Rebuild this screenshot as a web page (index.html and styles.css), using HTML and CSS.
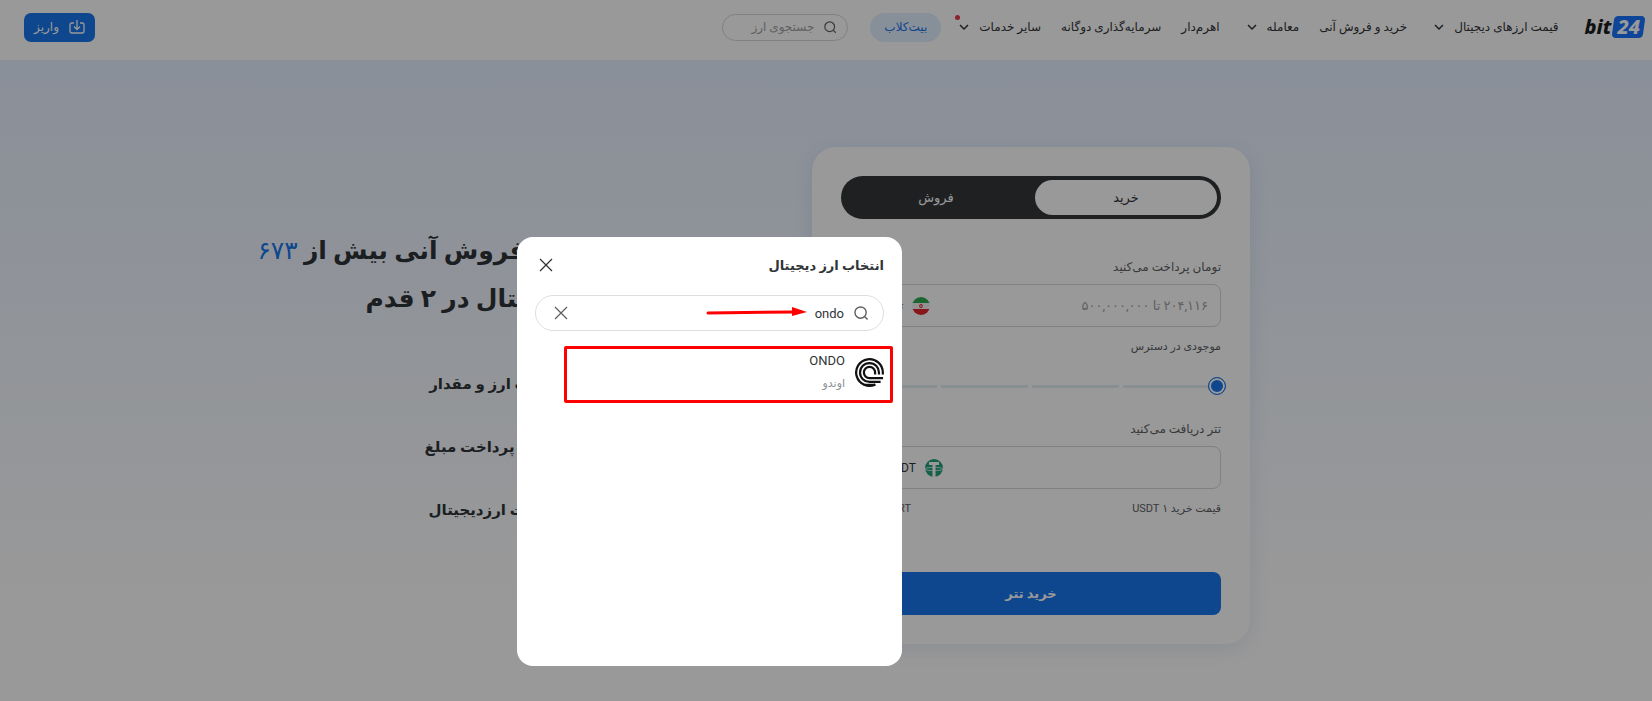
FILE: index.html
```html
<!DOCTYPE html>
<html lang="fa" dir="rtl">
<head>
  <meta charset="UTF-8" />
  <title>بیت۲۴ | خرید و فروش آنی</title>
  <meta name="viewport" content="width=device-width, initial-scale=1" />
  <link rel="stylesheet" href="styles.css">
</head>
<body>

  <header class="header">
    <a class="logo" href="#" dir="ltr"><span>bit</span><span class="logo-num">24</span></a>

    <nav class="nav">
      <a href="#" class="has-menu">قیمت ارزهای دیجیتال <svg class="chevron" viewBox="0 0 10 10"><path d="M1 3l4 4 4-4"/></svg></a>
      <a href="#">خرید و فروش آنی</a>
      <a href="#" class="has-menu">معامله <svg class="chevron" viewBox="0 0 10 10"><path d="M1 3l4 4 4-4"/></svg></a>
      <a href="#">اهرم‌دار</a>
      <a href="#">سرمایه‌گذاری دوگانه</a>
      <a href="#" class="has-dot">سایر خدمات <svg class="chevron" viewBox="0 0 10 10"><path d="M1 3l4 4 4-4"/></svg></a>
    </nav>

    <a class="club" href="#">بیت‌کلاب</a>

    <label class="top-search">
      <svg class="icon-search small" viewBox="0 0 16 16"><circle cx="7" cy="7" r="6"/><path d="M11.500 11.500l3 3"/></svg>
      <input type="text" placeholder="جستجوی ارز" aria-label="جستجوی ارز" />
    </label>

    <button class="deposit" type="button">
      <svg viewBox="0 0 16 16"><path d="M5 4H3a2 2 0 0 0-2 2v6a2 2 0 0 0 2 2h10a2 2 0 0 0 2-2V6a2 2 0 0 0-2-2h-2M8 1v9M5 7.500l3 3 3-3"/></svg>
      واریز
    </button>
  </header>

  <main class="hero">
    <form class="trade-card">
      <div class="tabs">
        <button type="button" class="tab active">خرید</button>
        <button type="button" class="tab">فروش</button>
      </div>

      <label class="field-label" for="pay">تومان پرداخت می‌کنید</label>
      <div class="field">
        <input type="text" id="pay" placeholder="۲۰۴,۱۱۶ تا ۵۰۰,۰۰۰,۰۰۰" />
        <button type="button" class="currency">
          <svg class="flag" viewBox="0 0 18 18">
            <clipPath id="round"><circle cx="9" cy="9" r="9"/></clipPath>
            <g clip-path="url(#round)">
              <rect width="18" height="18" fill="#f4f4f4"/>
              <rect width="18" height="6" fill="#2fa84f"/>
              <rect y="12" width="18" height="6" fill="#e3262e"/>
            </g>
            <circle cx="9" cy="9" r="1.600" fill="none" stroke="#e3262e" stroke-width=".8"/>
            <path d="M9 7v4" stroke="#e3262e" stroke-width=".7"/>
          </svg>
          تومان
        </button>
      </div>

      <label class="balance" for="amount">موجودی در دسترس</label>
      <input class="range" type="range" id="amount" min="0" max="100" value="0" />

      <label class="field-label" for="receive">تتر دریافت می‌کنید</label>
      <div class="field">
        <input type="text" id="receive" />
        <button type="button" class="currency wide">
          <svg class="coin" viewBox="0 0 18 18">
            <circle cx="9" cy="9" r="9" fill="#26a17b"/>
            <path d="M4 3h10v3h-3.500v12h-3V6H4z" fill="#fff"/>
            <path d="M0 9.500c3-1.500 15-1.500 18 0M0 10.500c4 1.500 14 1.500 18 0" fill="none" stroke="#fff" stroke-width=".7"/>
          </svg>
          USDT
        </button>
      </div>

      <div class="price">
        <span>قیمت خرید ۱ USDT</span>
        <span class="price-value" dir="ltr">۱۸۰,۴۲۰ IRT</span>
      </div>

      <button type="submit" class="buy">خرید تتر</button>
    </form>

    <section class="intro">
      <h1>خرید و فروش آنی بیش از <span>۶۷۳</span><br>ارز دیجیتال در ۲ قدم</h1>
      <ul>
        <li>انتخاب ارز و مقدار</li>
        <li>تایید و پرداخت مبلغ</li>
        <li>دریافت ارزدیجیتال</li>
      </ul>
    </section>
  </main>

  <div class="overlay">
    <div class="modal" role="dialog" aria-labelledby="modalTitle">
      <div class="modal-head">
        <h2 id="modalTitle">انتخاب ارز دیجیتال</h2>
        <button type="button" class="close" aria-label="بستن">
          <svg viewBox="0 0 14 14"><path d="M1 1l12 12M13 1L1 13"/></svg>
        </button>
      </div>

      <div class="modal-search">
        <svg class="icon-search" viewBox="0 0 16 16"><circle cx="7" cy="7" r="6"/><path d="M11.500 11.500l3 3"/></svg>
        <input type="text" value="ondo" aria-label="جستجوی ارز" />
        <button type="button" class="clear" aria-label="پاک کردن">
          <svg viewBox="0 0 14 14"><path d="M1 1l12 12M13 1L1 13"/></svg>
        </button>
        <svg class="arrow" viewBox="0 0 102 12"><path d="M2 7L88 6" stroke="#f00" stroke-width="3" stroke-linecap="round"/><path d="M86 1l15 5-15 4z" fill="#f00"/></svg>
      </div>

      <a class="coin-row" href="#">
        <svg class="ondo" viewBox="0 0 30 30">
          <path d="M21 27.400A13.800 13.800 0 1 1 28.800 15V17M26.500 24.800H15A9.800 9.800 0 1 1 24.800 15V17M29 20.800H15A5.800 5.800 0 1 1 20.800 15V17"/>
          <path d="M9 27.800h12"/>
        </svg>
        <span class="coin-name">
          <span>ONDO</span>
          <small>اوندو</small>
        </span>
      </a>
      <div class="highlight"></div>
    </div>
  </div>

</body>
</html>
```

FILE: styles.css
```css
* {
  box-sizing: border-box;
}
body {
  margin: 0;
  min-height: 100vh;
  font-family: Roboto, "DejaVu Sans", sans-serif;
  font-size: 12px;
  color: #303437;
  background: #fff;
  display: flex;
  flex-direction: column;
  overflow: hidden;
}
button,
input {
  font-family: inherit;
  font-size: inherit;
  color: inherit;
}
button {
  border: none;
  padding: 0;
  background: none;
  cursor: pointer;
}
a {
  color: inherit;
  text-decoration: none;
}
svg {
  flex: none;
  fill: none;
}

.header {
  height: 60px;
  padding: 0 8px 6px 24px;
  display: flex;
  align-items: center;
  background: #fff;
}
.logo {
  display: flex;
  align-items: center;
  gap: 2px;
  font-family: "Noto Sans", sans-serif;
  font-size: 20px;
  font-weight: 800;
  font-style: italic;
  line-height: 22px;
  color: #1b1d1f;
}
.logo-num {
  position: relative;
  z-index: 0;
  padding: 0 4px;
  color: #fff;
}
.logo-num::before {
  content: "";
  position: absolute;
  inset: 0;
  z-index: -1;
  border-radius: 4px;
  background: #1a73ff;
  transform: skewX(-8deg);
}
.nav {
  display: flex;
  gap: 20px;
  margin-right: 26px;
}
.nav a {
  position: relative;
  display: flex;
  align-items: center;
  gap: 10px;
  white-space: nowrap;
}
.nav .has-menu {
  padding-left: 7px;
}
.chevron {
  width: 10px;
  height: 10px;
  stroke: currentColor;
  stroke-width: 1.5;
}
.has-dot::after {
  content: "";
  position: absolute;
  left: -4px;
  top: -5px;
  width: 5px;
  height: 5px;
  border-radius: 50%;
  background: #e63950;
}
.club {
  margin-right: 18px;
  padding: 0 14px;
  line-height: 29px;
  border-radius: 15px;
  background: #e1efff;
  color: #1a73e8;
}
.top-search {
  display: flex;
  align-items: center;
  gap: 10px;
  width: 126px;
  height: 27px;
  margin-right: 22px;
  padding: 0 10px;
  border: 1px solid #d5d7d9;
  border-radius: 14px;
}
.top-search input,
.modal-search input {
  flex: 1;
  min-width: 0;
  padding: 0;
  border: none;
  outline: none;
  background: none;
}
.icon-search {
  width: 15px;
  height: 15px;
  stroke: #5c6064;
  stroke-width: 1.5;
}
.icon-search.small {
  width: 13px;
  height: 13px;
}
::placeholder {
  color: #a0a3a6;
  opacity: 1;
}
.deposit {
  display: flex;
  align-items: center;
  justify-content: center;
  gap: 10px;
  width: 71px;
  height: 29px;
  margin-right: auto;
  border-radius: 7px;
  background: #1877ec;
  color: #fff;
}
.deposit svg {
  width: 16px;
  height: 16px;
  stroke: #fff;
  stroke-width: 1.3;
}

.hero {
  flex: 1;
  display: flex;
  align-items: flex-start;
  gap: 201px;
  padding: 87px calc(50% - 424px) 57px 0;
  background: linear-gradient(#e6f0ff, #fff 85%);
}
.trade-card {
  flex: none;
  display: flex;
  flex-direction: column;
  width: 438px;
  padding: 29px;
  border-radius: 24px;
  background: #fff;
  box-shadow: 0 4px 20px rgba(50, 80, 160, 0.12);
}
.tabs {
  display: flex;
  gap: 8px;
  height: 43px;
  padding: 4px;
  border-radius: 22px;
  background: #323638;
}
.tab {
  flex: 1;
  border-radius: 18px;
  color: #fff;
  font-size: 13px;
}
.tab.active {
  background: #fff;
  color: #303437;
}
.field-label {
  line-height: 20px;
  margin: 38px 0 7px;
  color: #5c6064;
}
.field {
  display: flex;
  align-items: center;
  height: 43px;
  padding: 0 12px;
  border: 1px solid #d5d7d9;
  border-radius: 8px;
}
.field input {
  flex: 1;
  min-width: 0;
  padding: 0;
  border: none;
  outline: none;
  background: none;
  font-size: 13px;
}
.currency {
  display: flex;
  align-items: center;
  gap: 9px;
  width: 76px;
}
.currency.wide {
  width: 89px;
}
.flag,
.coin {
  width: 18px;
  height: 18px;
}
.balance {
  margin-top: 10px;
  line-height: 20px;
  font-size: 11px;
  color: #5c6064;
}
.range {
  appearance: none;
  height: 18px;
  margin: 20px -5px 0;
  background: repeating-linear-gradient(to left, #e2eff1 0 87px, #fff 87px 91px) 0 50% / calc(100% - 16px) 3px no-repeat;
}
.range::-webkit-slider-thumb {
  appearance: none;
  width: 18px;
  height: 18px;
  border: 1px solid #1877ec;
  border-radius: 50%;
  background: #1877ec;
  box-shadow: inset 0 0 0 2px #fff;
}
.range + .field-label {
  margin-top: 24px;
}
.price {
  display: flex;
  justify-content: space-between;
  margin: 10px 0 53px;
  line-height: 20px;
  font-size: 11px;
  color: #5c6064;
}
.price-value {
  width: 70px;
  text-align: right;
}
.buy {
  height: 43px;
  border-radius: 8px;
  background: #1877ec;
  color: #fff;
  font-size: 13px;
  font-weight: bold;
}

.intro {
  padding-top: 80px;
  white-space: nowrap;
}
.intro h1 {
  margin: 0 0 30px;
  font-size: 25px;
  line-height: 48px;
}
.intro h1 span {
  color: #1877ec;
  font-weight: normal;
}
.intro ul {
  margin: 0;
  padding: 0 48px 0 0;
  list-style: none;
  font-size: 15px;
  font-weight: bold;
  line-height: 63px;
}

.overlay {
  position: fixed;
  inset: 0;
  background: rgba(0, 0, 0, 0.4);
}
.modal {
  position: absolute;
  left: 517px;
  top: 237px;
  width: 385px;
  height: 429px;
  padding: 16px 18px;
  border-radius: 16px;
  background: #fff;
}
.modal-head {
  display: flex;
  align-items: center;
  justify-content: space-between;
  height: 24px;
  padding-left: 4px;
}
.modal-head h2 {
  margin: 0;
  font-size: 13px;
}
.close svg,
.clear svg {
  display: block;
  width: 14px;
  height: 14px;
  stroke: #303437;
  stroke-width: 1.3;
}
.clear svg {
  stroke: #5c6064;
}
.modal-search {
  position: relative;
  display: flex;
  align-items: center;
  gap: 10px;
  height: 36px;
  margin-top: 18px;
  padding: 0 14px 0 18px;
  border: 1px solid #dcdee0;
  border-radius: 18px;
}
.modal-search input {
  font-size: 13px;
}
.arrow {
  position: absolute;
  left: 170px;
  top: 10px;
  width: 102px;
  height: 12px;
}
.coin-row {
  display: flex;
  align-items: center;
  gap: 10px;
  margin-top: 18px;
}
.ondo {
  width: 29px;
  height: 29px;
  stroke: #111;
  stroke-width: 2.3;
}
.coin-name {
  display: flex;
  flex-direction: column;
  line-height: 23px;
  font-size: 13px;
}
.coin-name small {
  font-size: 11px;
  color: #8d9094;
}
.highlight {
  position: absolute;
  left: 47px;
  top: 109px;
  width: 329px;
  height: 57px;
  border: 3px solid #f00;
  border-radius: 2px;
}
```
